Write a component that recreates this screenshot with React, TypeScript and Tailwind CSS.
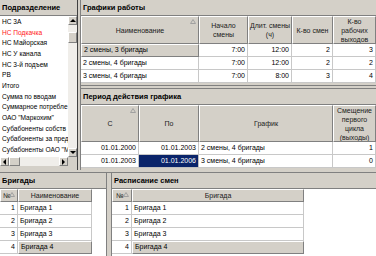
import React from "react";

const raised =
  "border border-t-white border-l-white border-r-[#808080] border-b-[#808080]";

function SortTri() {
  return (
    <svg className="absolute top-[2px] right-[2px]" width="6" height="5" viewBox="0 0 6 5">
      <path d="M3 0.5 L5.5 4.5 L0.5 4.5 Z" fill="none" stroke="#a0a0a0" strokeWidth="1" />
    </svg>
  );
}

function Arrow({ dir }: { dir: "up" | "down" | "left" | "right" }) {
  const d =
    dir === "up"
      ? "M0 4 L3 1 L6 4 Z"
      : dir === "down"
      ? "M0 1 L3 4 L6 1 Z"
      : dir === "left"
      ? "M4 0 L1 3 L4 6 Z"
      : "M1 0 L4 3 L1 6 Z";
  const w = dir === "up" || dir === "down" ? 6 : 5;
  const h = dir === "up" || dir === "down" ? 5 : 6;
  return (
    <svg width={w} height={h} viewBox={`0 0 ${w} ${h}`}>
      <path d={d} fill="#000" />
    </svg>
  );
}

function TitleBar({ text, className = "" }: { text: string; className?: string }) {
  return (
    <div
      className={`h-[16px] shrink-0 bg-[#d4d0c8] border-b border-[#808080] flex items-center pl-[2px] font-bold text-[7.5px] text-black whitespace-nowrap overflow-hidden ${className}`}
    >
      {text}
    </div>
  );
}

function HCell({
  w,
  children,
  sort,
  h,
  flex,
}: {
  w?: string;
  children?: React.ReactNode;
  sort?: boolean;
  h: string;
  flex?: boolean;
}) {
  return (
    <div
      className={`relative ${w ?? ""} ${flex ? "flex-1" : "shrink-0"} ${h} ${raised} bg-[#d4d0c8] flex items-center justify-center text-center leading-[9px] text-[7px] text-[#202020] overflow-hidden`}
    >
      <span>{children}</span>
      {sort && <SortTri />}
    </div>
  );
}

function Cell({
  w,
  children,
  right,
  sel,
  cur,
  flex,
}: {
  w?: string;
  children?: React.ReactNode;
  right?: boolean;
  sel?: boolean;
  cur?: boolean;
  flex?: boolean;
}) {
  const base = cur
    ? `bg-[#d4d0c8] ${raised}`
    : sel
    ? "bg-[#0a246a] text-white border-r border-b border-[#c0c0c0]"
    : "bg-white border-r border-b border-[#c8c8c8]";
  return (
    <div
      className={`${w ?? ""} ${flex ? "flex-1" : "shrink-0"} h-[13px] ${base} flex items-center ${
        right ? "justify-end pr-[2px]" : "pl-[2px]"
      } text-[7px] whitespace-nowrap overflow-hidden`}
    >
      {children}
    </div>
  );
}

const deps = [
  { t: "НС 3А" },
  { t: "НС Подкачка", red: true },
  { t: "НС Майорская" },
  { t: "НС У канала" },
  { t: "НС 3-й подъем" },
  { t: "РВ" },
  { t: "Итого" },
  { t: "Сумма по вводам" },
  { t: "Суммарное потребле" },
  { t: "ОАО \"Маркохим\"" },
  { t: "Субабоненты собств" },
  { t: "Субабоненты за пред" },
  { t: "Субабоненты ОАО \"М" },
];

function LeftList() {
  return (
    <div className="w-[78px] shrink-0 flex flex-col border-r border-[#404040]">
      <TitleBar text="Подразделение" />
      <div className="flex h-[141px]">
        <div className="w-[68px] bg-white pt-[1px] overflow-hidden">
          {deps.map((d) => (
            <div
              key={d.t}
              className={`h-[10.67px] leading-[10.67px] pl-[2px] text-[6.6px] whitespace-nowrap ${
                d.red ? "text-[#ff2020]" : "text-black"
              }`}
            >
              {d.t}
            </div>
          ))}
        </div>
        <div className="w-[9px] bg-[#f0eeea] flex flex-col">
          <div className={`h-[9px] bg-[#d4d0c8] ${raised} flex items-center justify-center`}>
            <Arrow dir="up" />
          </div>
          <div className="h-[7px]" />
          <div className={`h-[11px] bg-[#d4d0c8] ${raised}`} />
          <div className="flex-1" />
          <div className={`h-[9px] bg-[#d4d0c8] ${raised} flex items-center justify-center`}>
            <Arrow dir="down" />
          </div>
        </div>
      </div>
      <div className="flex h-[9px]">
        <div className="w-[68px] bg-[#f0eeea] flex">
          <div className={`w-[9px] bg-[#d4d0c8] ${raised} flex items-center justify-center`}>
            <Arrow dir="left" />
          </div>
          <div className={`w-[11px] bg-[#d4d0c8] ${raised}`} />
          <div className="flex-1" />
          <div className={`w-[9px] bg-[#d4d0c8] ${raised} flex items-center justify-center`}>
            <Arrow dir="right" />
          </div>
        </div>
        <div className="w-[9px] bg-[#d4d0c8]" />
      </div>
      <div className="flex-1 bg-[#d4d0c8]" />
    </div>
  );
}

const schedules = [
  ["2 смены, 3 бригады", "7:00", "12:00", "2", "3"],
  ["2 смены, 4 бригады", "7:00", "12:00", "2", "2"],
  ["3 смены, 4 бригады", "7:00", "8:00", "3", "4"],
];

function Schedules() {
  return (
    <div className="h-[86px] shrink-0 flex flex-col border-b border-[#808080]">
      <TitleBar text="Графики работы" />
      <div className="flex-1 flex flex-col bg-[#d4d0c8] overflow-hidden">
        <div className="flex">
          <HCell w="w-[118px]" h="h-[28px]" sort>
            Наименование
          </HCell>
          <HCell w="w-[49px]" h="h-[28px]">
            Начало
            <br />
            смены
          </HCell>
          <HCell w="w-[44px]" h="h-[28px]">
            Длит. смены
            <br />
            (ч)
          </HCell>
          <HCell w="w-[41px]" h="h-[28px]">
            К-во смен
          </HCell>
          <HCell flex h="h-[28px]">
            К-во
            <br />
            рабочих
            <br />
            выходов
          </HCell>
        </div>
        {schedules.map((r, i) => (
          <div className="flex" key={i}>
            <Cell w="w-[118px]" cur={i === 0}>
              {r[0]}
            </Cell>
            <Cell w="w-[49px]" right>
              {r[1]}
            </Cell>
            <Cell w="w-[44px]" right>
              {r[2]}
            </Cell>
            <Cell w="w-[41px]" right>
              {r[3]}
            </Cell>
            <Cell flex right>
              {r[4]}
            </Cell>
          </div>
        ))}
      </div>
    </div>
  );
}

const periods = [
  ["01.01.2000", "01.01.2003", "2 смены, 4 бригады", "1"],
  ["01.01.2003", "01.01.2006", "3 смены, 4 бригады", "0"],
];

function Periods() {
  return (
    <div className="flex-1 flex flex-col mt-[2px] border-t border-[#808080]">
      <TitleBar text="Период действия графика" />
      <div className="flex-1 flex flex-col bg-[#d4d0c8] overflow-hidden">
        <div className="flex">
          <HCell w="w-[58px]" h="h-[37px]" sort>
            С
          </HCell>
          <HCell w="w-[60px]" h="h-[37px]">
            По
          </HCell>
          <HCell w="w-[134px]" h="h-[37px]">
            График
          </HCell>
          <HCell flex h="h-[37px]">
            Смещение
            <br />
            первого
            <br />
            цикла
            <br />
            (выходы)
          </HCell>
        </div>
        {periods.map((r, i) => (
          <div className="flex" key={i}>
            <Cell w="w-[58px]" right>
              {r[0]}
            </Cell>
            <Cell w="w-[60px]" right sel={i === 1}>
              {r[1]}
            </Cell>
            <Cell w="w-[134px]">{r[2]}</Cell>
            <Cell flex right>
              {r[3]}
            </Cell>
          </div>
        ))}
      </div>
    </div>
  );
}

function Brigades({ wide }: { wide?: boolean }) {
  const rows = ["Бригада 1", "Бригада 2", "Бригада 3", "Бригада 4"];
  return (
    <div className="flex flex-col h-full">
      <div className="flex">
        <HCell w={wide ? "w-[20px]" : "w-[18px]"} h="h-[13px]" sort>
          <span className="pr-[4px]">№</span>
        </HCell>
        <HCell w={wide ? "w-[172px]" : "w-[74px]"} h="h-[13px]">
          {wide ? "Бригада" : "Наименование"}
        </HCell>
        <div className="flex-1 bg-white" />
      </div>
      {rows.map((r, i) => (
        <div className="flex" key={r}>
          <Cell w={wide ? "w-[20px]" : "w-[18px]"} right>
            {i + 1}
          </Cell>
          <Cell w={wide ? "w-[172px]" : "w-[74px]"} cur={i === 3}>
            {r}
          </Cell>
          <div className="flex-1 bg-white" />
        </div>
      ))}
      <div className="flex-1 bg-white" />
    </div>
  );
}

export default function App() {
  return (
    <div className="w-[376px] h-[256px] bg-[#d4d0c8] flex flex-col overflow-hidden font-['Liberation_Sans',Arial,sans-serif] text-black">
      <div className="h-[170px] shrink-0 flex">
        <LeftList />
        <div className="w-[2px] shrink-0" />
        <div className="flex-1 flex flex-col border-l border-[#808080]">
          <Schedules />
          <Periods />
        </div>
      </div>
      <div className="h-[3px] shrink-0 border-b border-[#808080]" />
      <div className="flex-1 flex">
        <div className="w-[107px] shrink-0 flex flex-col border-r border-[#808080]">
          <TitleBar text="Бригады" />
          <div className="flex-1">
            <Brigades />
          </div>
        </div>
        <div className="w-[4px] shrink-0" />
        <div className="flex-1 flex flex-col border-l border-[#808080]">
          <TitleBar text="Расписание смен" />
          <div className="flex-1">
            <Brigades wide />
          </div>
        </div>
      </div>
    </div>
  );
}
